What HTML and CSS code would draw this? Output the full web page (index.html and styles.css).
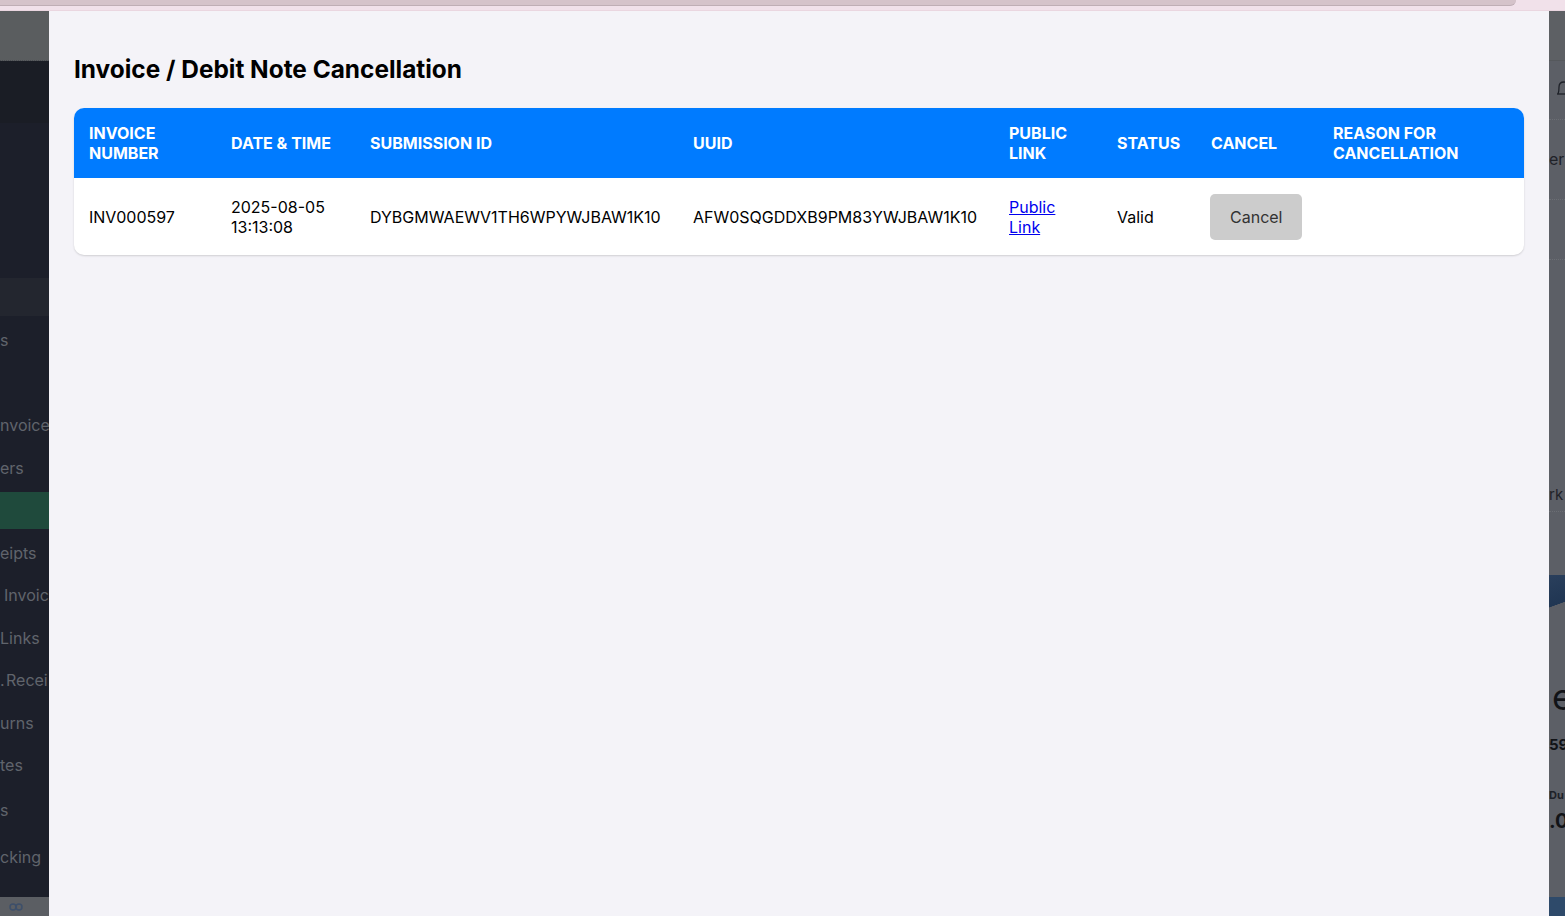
FILE: index.html
```html
<html lang="en">
<head>
  <meta charset="UTF-8">
  <title>Invoice / Debit Note Cancellation</title>
  <link rel="stylesheet" href="styles.css">
</head>
<body>

<div class="topbar">
  <div class="topbar-pill"></div>
</div>

<div class="screen">
  <!-- dimmed sidebar behind the modal -->
  <aside class="sidebar">
    <div class="sb-head"></div>
    <div class="sb-brand"></div>
    <div class="sb-block"></div>
    <div class="sb-block sb-lit"></div>
    <nav class="sb-menu">
      <div class="sb-item">s</div>
      <div class="sb-item"></div>
      <div class="sb-item">nvoice</div>
      <div class="sb-item">ers</div>
      <div class="sb-item active"></div>
      <div class="sb-item">eipts</div>
      <div class="sb-item indent">Invoic</div>
      <div class="sb-item">Links</div>
      <div class="sb-item indent2"><span class="dot">.</span>Recei</div>
      <div class="sb-item">urns</div>
      <div class="sb-item">tes</div>
      <div class="sb-item tall">s</div>
      <div class="sb-item tall">cking</div>
    </nav>
    <div class="sb-foot">
      <svg width="14" height="10" viewBox="0 0 14 10"><circle cx="4" cy="5" r="3" fill="none" stroke="#3d4f6a" stroke-width="1.5"/><circle cx="10" cy="5" r="3" fill="none" stroke="#3d4f6a" stroke-width="1.5"/></svg>
    </div>
  </aside>

  <!-- modal -->
  <div class="modal">
    <h2>Invoice / Debit Note Cancellation</h2>
    <div class="table-wrap">
      <table>
        <colgroup>
          <col style="width:142px">
          <col style="width:139px">
          <col style="width:323px">
          <col style="width:316px">
          <col style="width:108px">
          <col style="width:94px">
          <col style="width:122px">
          <col style="width:206px">
        </colgroup>
        <thead>
          <tr>
            <th>Invoice Number</th>
            <th>Date &amp; Time</th>
            <th>Submission ID</th>
            <th>UUID</th>
            <th>Public Link</th>
            <th>Status</th>
            <th>Cancel</th>
            <th>Reason for Cancellation</th>
          </tr>
        </thead>
        <tbody>
          <tr>
            <td>INV000597</td>
            <td>2025-08-05 13:13:08</td>
            <td>DYBGMWAEWV1TH6WPYWJBAW1K10</td>
            <td>AFW0SQGDDXB9PM83YWJBAW1K10</td>
            <td><a href="#">Public Link</a></td>
            <td>Valid</td>
            <td><button class="btn-cancel">Cancel</button></td>
            <td></td>
          </tr>
        </tbody>
      </table>
    </div>
  </div>

  <!-- dimmed page content on the right -->
  <aside class="rightside">
    <div class="rs-head"></div>
    <div class="rs-row rs-bell">
      <svg width="12" height="20" viewBox="0 0 12 20"><path d="M2 15 C3 13 3 11 3 8 C3 5 5 3 8 3 C11 3 12 5 12 8" fill="none" stroke="#1e2128" stroke-width="1.3"/><path d="M1 15 L12 15" stroke="#1e2128" stroke-width="1.3"/></svg>
    </div>
    <div class="rs-row rs-text">er</div>
    <div class="rs-row rs-short"></div>
    <div class="rs-gap"></div>
    <div class="rs-row rs-text rs-link">rk</div>
    <div class="rs-space"></div>
    <div class="rs-banner"></div>
    <div class="rs-big">e</div>
    <div class="rs-num">59</div>
    <div class="rs-label">Du</div>
    <div class="rs-amount">.0</div>
    <div class="rs-fill"></div>
    <div class="rs-foot"></div>
  </aside>
</div>

</body>
</html>
```

FILE: styles.css
```css
body {
  margin: 0;
  font-family: Inter, "Noto Sans", Arial, sans-serif;
  background-color: #5d6064;
  height: 916px;
  overflow: hidden;
}

.topbar {
  height: 11px;
  background-color: #f1e1ea;
  border-bottom: 1px solid #ead6e0;
  box-sizing: border-box;
}

.topbar-pill {
  width: 1516px;
  height: 5px;
  background-color: #d5c3ca;
  border-bottom: 1px solid #bfaeb5;
  border-radius: 0 0 12px 0;
}

.screen {
  display: flex;
  height: 905px;
}

/* sidebar */
.sidebar {
  width: 49px;
  flex-shrink: 0;
  display: flex;
  flex-direction: column;
  background-color: #1c1f2a;
  overflow: hidden;
}

.sb-head {
  height: 49px;
  background-color: #5a5d5f;
  border-bottom: 1px dotted #4a4d52;
}

.sb-brand {
  height: 62px;
  background-color: #1a1d25;
}

.sb-block {
  height: 155px;
}

.sb-lit {
  height: 38px;
  background-color: #23262f;
}

.sb-menu {
  flex: 1;
  display: flex;
  flex-direction: column;
  padding-top: 6px;
}

.sb-item {
  flex-shrink: 0;
  height: 37px;
  line-height: 37px;
  margin-bottom: 5.5px;
  font-size: 16px;
  color: #60646c;
  white-space: nowrap;
}

.sb-item.active {
  background-color: #1f4a3c;
}

.sb-item.indent {
  padding-left: 4px;
}

.sb-item.indent2 .dot {
  display: inline-block;
  width: 6px;
}

.sb-item.tall {
  margin-top: 2px;
  margin-bottom: 8px;
}

.sb-foot {
  height: 19px;
  background-color: #5b5e63;
  display: flex;
  align-items: center;
  padding-left: 9px;
}

/* modal */
.modal {
  width: 1500px;
  flex-shrink: 0;
  background-color: #f4f3f8;
  padding: 0 25px;
  box-sizing: border-box;
}

.modal h2 {
  margin: 44px 0 24px;
  font-size: 24.4px;
  font-weight: 700;
  line-height: 29px;
  color: #000;
}

.table-wrap {
  background: white;
  border-radius: 10px;
  overflow: hidden;
  box-shadow: 0 1px 2px rgba(0,0,0,0.15);
}

table {
  width: 1450px;
  border-collapse: collapse;
  table-layout: fixed;
}

th {
  background-color: #007bff;
  color: white;
  text-align: left;
  text-transform: uppercase;
  font-size: 16px;
  font-weight: 700;
  line-height: 20px;
  padding: 15px;
  vertical-align: middle;
}

td {
  font-size: 16px;
  line-height: 20px;
  padding: 16px 15px 15px;
  color: #000;
  vertical-align: middle;
}

td a {
  color: #0000ee;
}

.btn-cancel {
  height: 46px;
  padding: 0 20px;
  margin-left: -1px;
  border: none;
  border-radius: 5px;
  background-color: #cccccc;
  color: #333;
  font-family: inherit;
  font-size: 16px;
}

/* right side behind the modal */
.rightside {
  flex: 1;
  display: flex;
  flex-direction: column;
  background-color: #5c5f66;
  overflow: hidden;
}

.rs-head {
  height: 49px;
  background-color: #5d6064;
  border-bottom: 1px solid #55585c;
}

.rs-row {
  border-bottom: 1px dotted #6b6e74;
  white-space: nowrap;
}

.rs-bell {
  height: 59px;
  padding: 18px 0 0 7px;
  box-sizing: border-box;
}

.rs-text {
  height: 79px;
  line-height: 79px;
  font-size: 16px;
  color: #1f2228;
}

.rs-short {
  height: 59px;
}

.rs-gap {
  height: 210px;
}

.rs-link {
  height: 41px;
  line-height: 50px;
  font-size: 15px;
}

.rs-space {
  height: 63px;
}

.rs-banner {
  height: 48px;
  background: linear-gradient(160deg, #2a3f5c 0%, #203653 60%, #5c5f66 61%);
}

.rs-big {
  margin-top: 52px;
  padding-left: 3px;
  font-size: 36px;
  line-height: 44px;
  color: #111317;
}

.rs-num {
  margin-top: 16px;
  font-size: 15px;
  font-weight: 700;
  color: #111317;
}

.rs-label {
  margin-top: 34px;
  font-size: 11px;
  font-weight: 700;
  color: #1e2128;
}

.rs-amount {
  margin-top: 7px;
  font-size: 20px;
  font-weight: 700;
  color: #111317;
}

.rs-fill {
  flex: 1;
}

.rs-foot {
  height: 19px;
  background-color: #2e4a6a;
}
```
